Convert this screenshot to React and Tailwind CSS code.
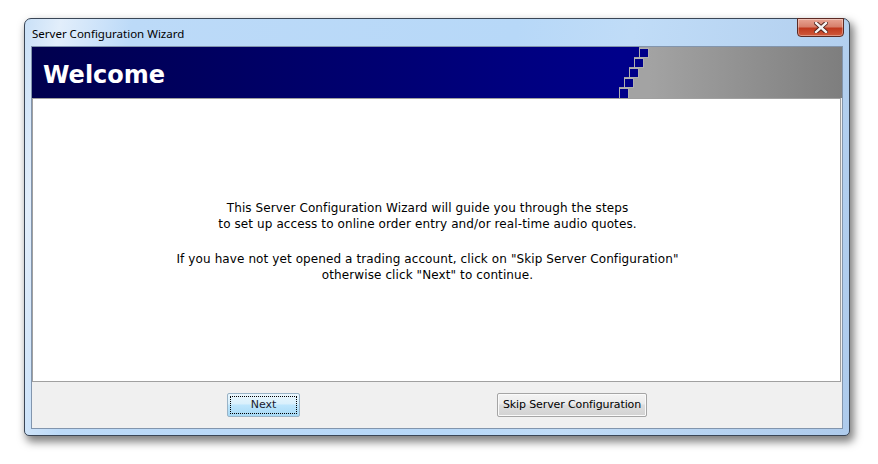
import React from "react";

function Stairs() {
  const rows = [0, 1, 2, 3, 4];
  return (
    <svg width="30" height="51" viewBox="0 0 30 51" className="block shrink-0">
      <rect x="0" y="0" width="30" height="51" fill="#a3a3a3" />
      {rows.map((i) => {
        const sx = 20 - i * 5;
        const y = i * 10;
        const h = i === 4 ? 11 : 10;
        return (
          <g key={i}>
            <rect x="0" y={y} width={sx} height={h} fill="#00008a" />
            <rect x={sx + 0.5} y={y + 1.5} width="9" height={h - 1} fill="#00008a" stroke="#b0b0b0" strokeWidth="1" />
          </g>
        );
      })}
    </svg>
  );
}

export default function App() {
  const body = { fontFamily: '"DejaVu Sans", Verdana, sans-serif' };
  return (
    <div className="w-[878px] h-[464px] bg-white overflow-hidden">
      <div className="relative ml-[24px] mt-[18px] w-[826px] h-[418px] rounded-t-[7px] rounded-b-[5px] border border-[#3a4656] bg-[#bcd7f2] pt-[27px] px-[6px] pb-[6px] shadow-[3px_5px_9px_1px_rgba(0,0,0,0.5)] bg-[linear-gradient(100deg,#c9e0f7_0%,#e2eefb_4%,#bcdaf8_12%,#b7d8f8_55%,#c0dcf7_68%,#aecbec_100%)]">
        <div
          className="absolute left-[7px] top-[8px] text-[11.5px] leading-[14px] text-black"
          style={{ fontFamily: '"Noto Sans", "Open Sans", sans-serif' }}
        >
          Server Configuration Wizard
        </div>
        <div className="absolute right-[5px] top-[-1px] w-[47px] h-[19px] rounded-b-[4px] border border-[#5b2a24] bg-[linear-gradient(180deg,#e8a493_0%,#d7806c_45%,#c0391e_55%,#cf5a3c_100%)] flex items-center justify-center shadow-[inset_0_0_0_1px_rgba(255,255,255,0.35)]">
          <svg width="14" height="11" viewBox="0 0 14 11">
            <path d="M2 1 L12 10 M12 1 L2 10" stroke="#4a1c15" strokeWidth="4.2" strokeLinecap="square" />
            <path d="M2 1 L12 10 M12 1 L2 10" stroke="#f4f4f4" strokeWidth="2.4" strokeLinecap="square" />
          </svg>
        </div>
        <div className="w-full h-full border border-[#8295ad] bg-[#f0f0f0] flex flex-col">
          <div className="h-[51px] flex shrink-0">
            <div className="flex-1 bg-[linear-gradient(90deg,#00004e_0%,#00008a_100%)] flex items-center pl-[11px] pt-[4px]">
              <span className="text-white font-bold text-[24px] leading-none" style={body}>
                Welcome
              </span>
            </div>
            <Stairs />
            <div className="w-[193px] bg-[linear-gradient(90deg,#a3a3a3_0%,#7e7e7e_100%)]" />
          </div>
          <div className="h-[284px] mr-[1px] bg-white border border-[#a0a0a0] shrink-0">
            <div className="pt-[101px] pr-[18px] text-center text-[12px] leading-[16px] text-black tracking-[0.1px]" style={body}>
              <p>This Server Configuration Wizard will guide you through the steps</p>
              <p>to set up access to online order entry and/or real-time audio quotes.</p>
              <p className="mt-[19px]">If you have not yet opened a trading account, click on "Skip Server Configuration"</p>
              <p>otherwise click "Next" to continue.</p>
            </div>
          </div>
          <div className="flex-1 flex items-start pt-[11px] pl-[195px] gap-[196px]">
            <button className="w-[73px] h-[24px] rounded-[2px] border border-[#9ab3c6] bg-[linear-gradient(180deg,#eaf6fd_0%,#d9f0fc_45%,#bee6fd_50%,#a7d9f5_100%)] p-[2px]">
              <div className="w-full h-full border border-dotted border-black flex items-center justify-center text-[11px] text-[#1a1a2e]" style={body}>
                Next
              </div>
            </button>
            <button className="ml-[1px] w-[150px] h-[24px] rounded-[2px] border border-[#a5a5a5] bg-[linear-gradient(180deg,#f4f4f4_0%,#ebebeb_45%,#dddddd_50%,#d2d2d2_100%)] shadow-[inset_0_0_0_1px_#fafafa] flex items-center justify-center text-[11px] text-black tracking-[-0.12px]" style={body}>
              Skip Server Configuration
            </button>
          </div>
        </div>
      </div>
    </div>
  );
}
